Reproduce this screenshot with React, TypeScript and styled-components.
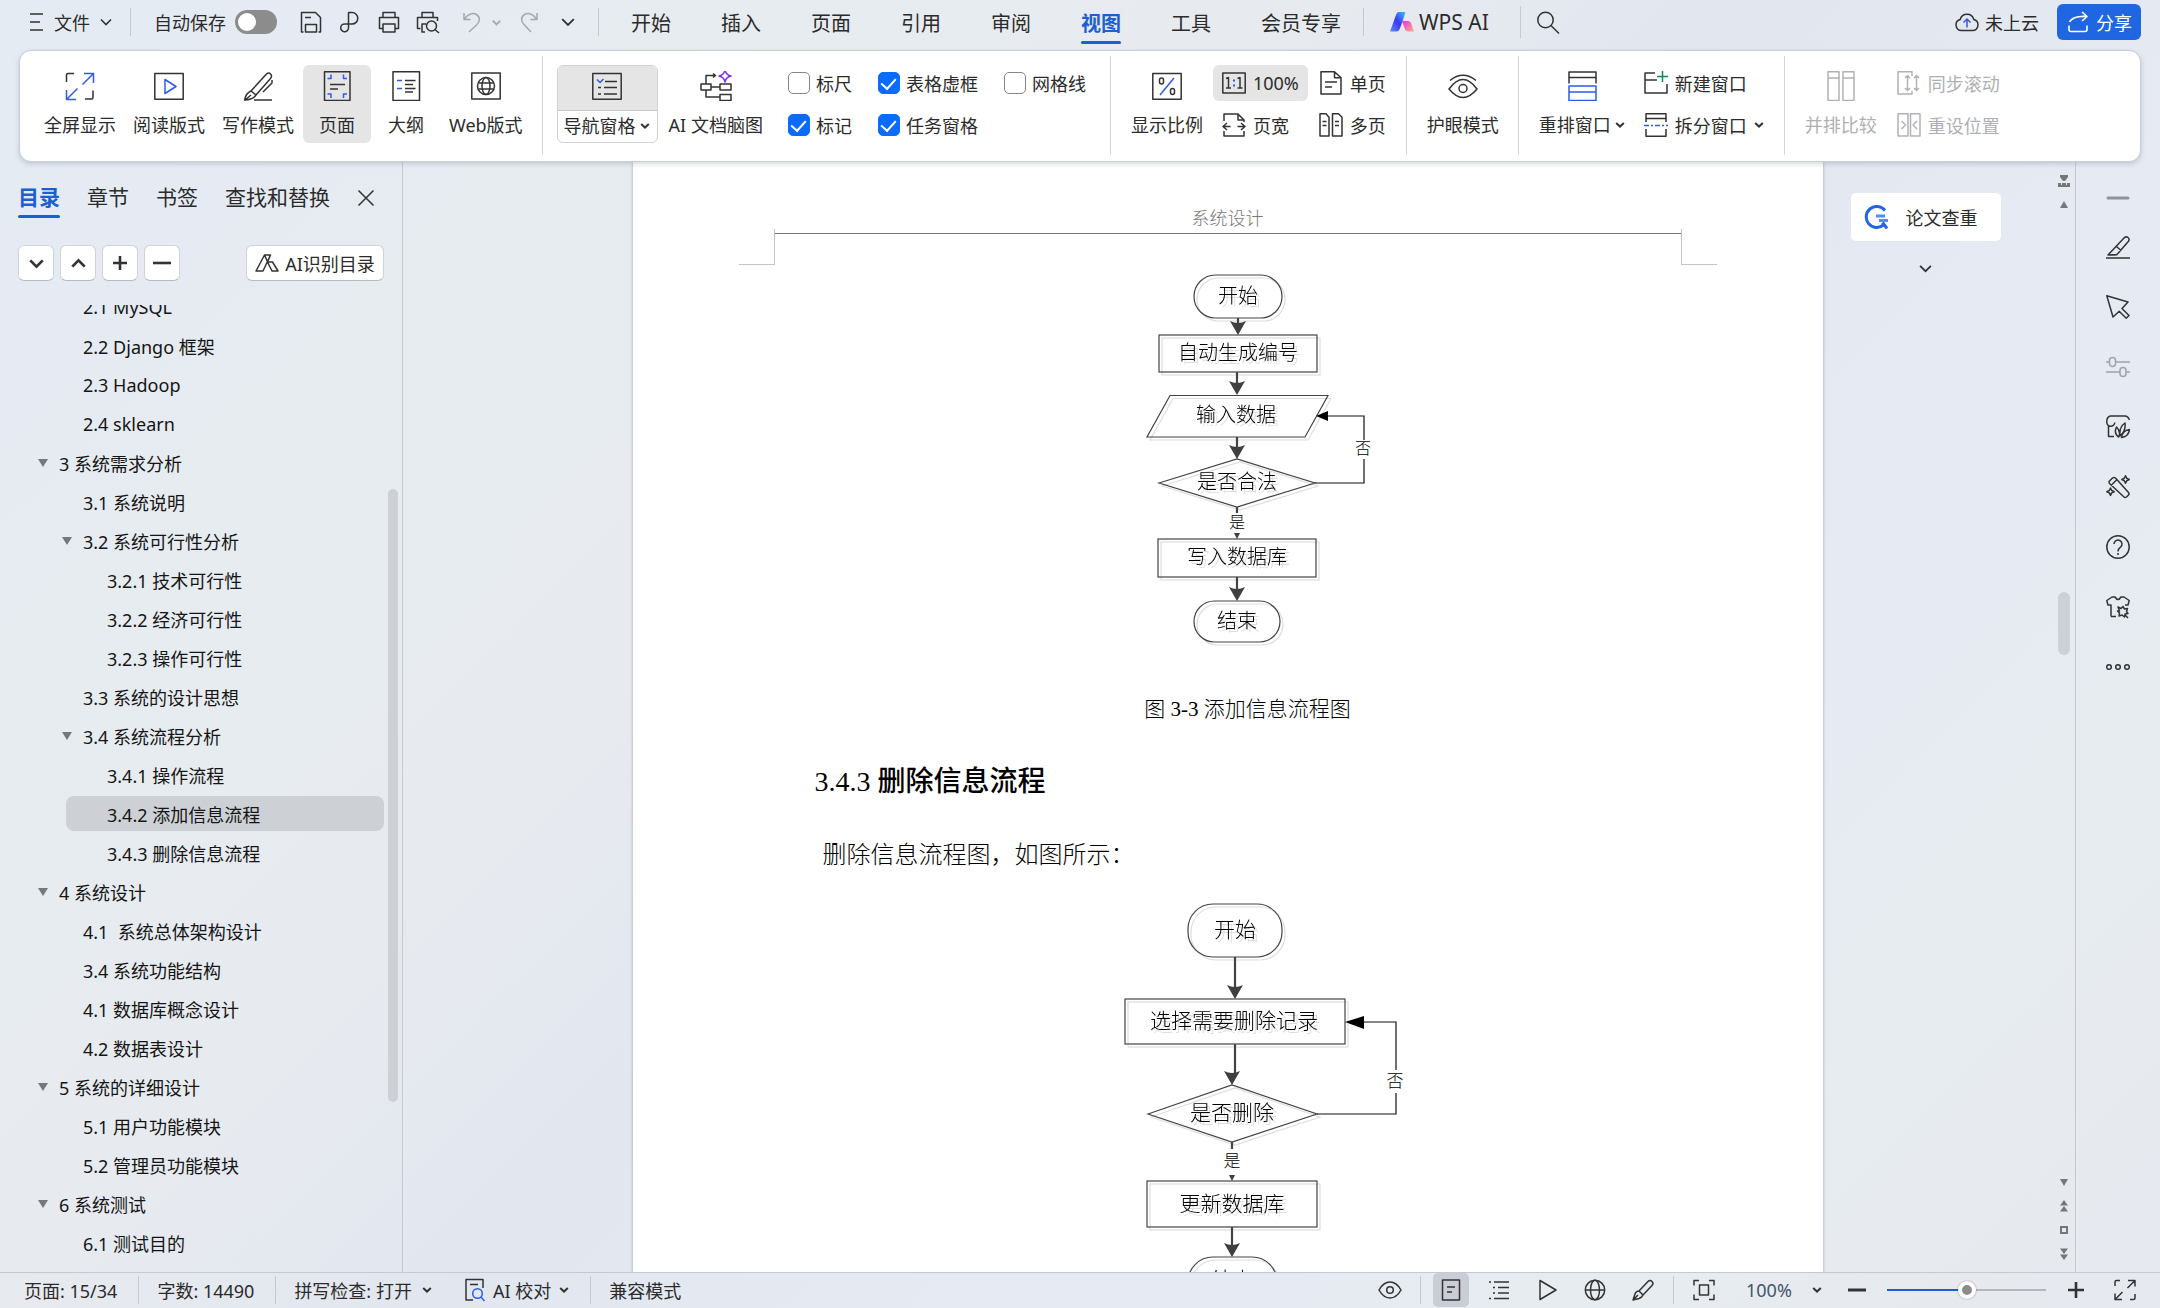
import React from "react";
import styled, { createGlobalStyle, css } from "styled-components";

const INK = "#2b2b2b";
const BLUE = "#1b5fd0";
const ACCENT = "#2f5be8";
const LINE = "#c6cad0";

const GlobalStyle = createGlobalStyle`
  * { box-sizing: border-box; }
  html, body { margin: 0; height: 100%; }
  body {
    font-family: "Noto Sans", "Noto Sans CJK SC", sans-serif;
    font-size: 18px;
    color: ${INK};
  }
  button, input, select { font: inherit; color: inherit; margin: 0; }
  button { background: none; border: 0; padding: 0; cursor: pointer; white-space: nowrap; }
  ul, p, h2, figure { margin: 0; padding: 0; }
  ul { list-style: none; }
`;

const Window = styled.div`
  display: flex;
  flex-direction: column;
  height: 100vh;
  overflow: hidden;
  background: linear-gradient(135deg, #e5ebf3 0%, #e6ebf3 12%, #e7ecf0 22%, #e7ebf0 38%, #e2e6ef 50%, #e5eaf3 66%, #e6ebf3 74%, #e7ecf0 84%, #e6e9ef 100%);
`;

/* ---------- icons ---------- */

type IconProps = { children: React.ReactNode; w?: number; h?: number; sw?: number; color?: string };
const Svg = styled.svg`
  display: block;
  flex: none;
`;
const Icon = ({ children, w = 24, h = 24, sw = 1.5, color = "#333" }: IconProps) => (
  <Svg width={w} height={h} viewBox={`0 0 ${w} ${h}`} fill="none" stroke={color} strokeWidth={sw} strokeLinejoin="round" aria-hidden="true">
    {children}
  </Svg>
);

const Chevron = ({ size = 12, sw = 1.6, up = false, color = "#333" }: { size?: number; sw?: number; up?: boolean; color?: string }) => (
  <Svg width={size} height={size} viewBox="0 0 12 12" fill="none" stroke={color} strokeWidth={sw} aria-hidden="true">
    <path d={up ? "M1 8.5 6 3.5l5 5" : "M1 3.5l5 5 5-5"} />
  </Svg>
);
const Caret = () => (
  <Svg width={10} height={10} viewBox="0 0 10 10" fill="none" stroke="#333" strokeWidth={2} aria-hidden="true">
    <path d="M1.2 3 5 6.6 8.8 3" />
  </Svg>
);

/* ---------- title bar ---------- */

const TitleBar = styled.header`
  display: flex;
  align-items: center;
  flex: none;
  height: 50px;
  padding: 0 19px 6px 28px;
`;
const FileButton = styled.button`
  display: flex;
  align-items: center;
  gap: 10px;
`;
const Rule = styled.i<{ $h?: number; $l?: number; $r?: number }>`
  flex: none;
  width: 1px;
  height: ${(p) => p.$h ?? 28}px;
  margin: 0 ${(p) => p.$r ?? 18}px 0 ${(p) => p.$l ?? 18}px;
  background: ${LINE};
`;
const SwitchLabel = styled.label`
  display: flex;
  align-items: center;
  gap: 9px;
  white-space: nowrap;
`;
const Switch = styled.input`
  appearance: none;
  width: 42px;
  height: 24px;
  border-radius: 12px;
  background: #8c8c8c;
  padding: 3px;
  &::after {
    content: "";
    display: block;
    width: 18px;
    height: 18px;
    border-radius: 50%;
    background: #fff;
  }
`;
const QuickTools = styled.div`
  display: flex;
  gap: 15px;
  margin-left: 22px;
`;
const HistoryTools = styled(QuickTools)`
  align-items: center;
  margin-left: 20px;
`;
const UndoPair = styled.div`
  display: flex;
  align-items: center;
  gap: 6px;
`;
const Center = styled.button`
  display: flex;
  align-items: center;
  justify-content: center;
  min-width: 24px;
  height: 24px;
`;
const SmallCenter = styled(Center)`
  min-width: 12px;
`;
const Tabs = styled.nav`
  display: flex;
  gap: 50px;
  margin-left: 14px;
`;
const underline = css`
  color: ${BLUE};
  font-weight: 700;
  &::after {
    content: "";
    position: absolute;
    left: 0;
    right: 0;
    bottom: 0;
    height: 3px;
    border-radius: 2px;
    background: ${BLUE};
  }
`;
const Tab = styled.button<{ $on?: boolean }>`
  position: relative;
  height: 43px;
  font-size: 20px;
  ${(p) => p.$on && underline}
`;
const AiButton = styled.button`
  display: flex;
  align-items: center;
  gap: 5px;
  font-size: 21px;
`;
const CloudButton = styled.button`
  display: flex;
  align-items: center;
  gap: 6px;
  margin: 0 18px 0 auto;
`;
const ShareButton = styled.button`
  display: flex;
  align-items: center;
  gap: 8px;
  height: 36px;
  padding: 0 9px 0 11px;
  border-radius: 6px;
  background: #1f66e0;
  color: #fff;
`;

const TABS = ["开始", "插入", "页面", "引用", "审阅", "视图", "工具", "会员专享"];

const TopBar = () => (
  <TitleBar>
    <FileButton>
      <Icon w={16} h={20}><path d="M2 2h13M2 10h10M2 18h13" /></Icon>
      文件
      <Chevron />
    </FileButton>
    <Rule $r={23} />
    <SwitchLabel>
      自动保存
      <Switch type="checkbox" role="switch" />
    </SwitchLabel>
    <QuickTools>
      <Center aria-label="保存"><Icon><path d="M4.500 22H2.500V2.500h14l5 5V22h-2M6.500 22v-7.500h11V22zM6 7.500h6" /></Icon></Center>
      <Center aria-label="输出为PDF"><Icon><path d="M10 2.500h4a5.800 5.800 0 0 1 0 11.600H7.800a3.900 3.900 0 1 0 2.700 3.900V2.500" /></Icon></Center>
      <Center aria-label="打印"><Icon><path d="M6 7.500v-5h12v5M6 18.500H2.500v-11h19v11H18M6 14h12v8H6z" /></Icon></Center>
      <Center aria-label="打印预览"><Icon><path d="M6 7.500v-5h11v5M4.500 18.500h-3v-11h20V11M9 22H6v-8h4" /><circle cx="15.500" cy="16" r="5" /><path d="m19 19.500 4 3.500" /></Icon></Center>
    </QuickTools>
    <HistoryTools>
      <UndoPair>
        <Center aria-label="撤销"><Icon color="#a5a8ac"><path d="M4 3v6.500h6.500M4.500 9C8 3.500 13 2.500 16.500 4.500c4 2.600 3.500 7 .5 10L9 22" /></Icon></Center>
        <SmallCenter aria-label="撤销列表"><Chevron size={9} sw={2.400} color="#a5a8ac" /></SmallCenter>
      </UndoPair>
      <Center aria-label="恢复"><Icon color="#a5a8ac"><path d="M20 3v6.500h-6.500M19.500 9C16 3.500 11 2.500 7.500 4.500c-4 2.600-3.500 7-.5 10L14 22" /></Icon></Center>
      <Center aria-label="更多命令"><Chevron size={14} /></Center>
    </HistoryTools>
    <Rule />
    <Tabs>
      {TABS.map((t) => <Tab key={t} $on={t === "视图"}>{t}</Tab>)}
    </Tabs>
    <Rule $l={22} $r={26} />
    <AiButton>
      <Svg width={24} height={20} viewBox="0 0 24 20" aria-hidden="true">
        <defs>
          <linearGradient id="wa" x1="0" y1="1" x2="1" y2="0"><stop offset="0" stopColor="#5b8bff" /><stop offset=".5" stopColor="#4036f2" /><stop offset="1" stopColor="#38c8ff" /></linearGradient>
          <linearGradient id="wb" x1="0" y1="0" x2="1" y2="1"><stop offset="0" stopColor="#e52ef0" /><stop offset="1" stopColor="#ffb27a" /></linearGradient>
        </defs>
        <path d="M8.500 0h7l-3 9.500-3 8q-1 2-3 2H0L6 3Q7 0 8.500 0z" fill="url(#wa)" />
        <path d="M12 9h6q2 0 3 2l3 8.500h-6q-2 0-3-2z" fill="url(#wb)" />
      </Svg>
      WPS AI
    </AiButton>
    <Rule $l={31} $r={15} $h={32} />
    <Center aria-label="搜索"><Icon><circle cx="9.500" cy="10" r="7.700" /><path d="m15 15.500 8 8" /></Icon></Center>
    <CloudButton>
      <Icon><path d="M6.500 20.500a5.600 5.600 0 0 1-1.300-11 7 7 0 0 1 13.600 0 5.600 5.600 0 0 1-1.300 11z" /><path d="M12 17.500v-8M8.500 12.500 12 9l3.500 3.500" stroke={ACCENT} /></Icon>
      未上云
    </CloudButton>
    <ShareButton>
      <Icon w={20} h={24} color="#fff" sw={1.600}><path d="M1 15.500v4q0 2 2 2h14q2 0 2-2v-4M1.500 12C4 7 10 6 19 6.500M14 2l5 4.500-5 4.500" /></Icon>
      分享
    </ShareButton>
  </TitleBar>
);

/* ---------- ribbon ---------- */

const Ribbon = styled.section`
  position: relative;
  z-index: 2;
  flex: none;
  display: flex;
  height: 112px;
  margin: 0 19px;
  padding: 5px 16px;
  border: 1px solid #c9ced4;
  border-radius: 12px;
  background: #fff;
  box-shadow: 0 2px 5px rgba(60, 80, 90, 0.22);
`;
const Group = styled.div<{ $gap?: number }>`
  display: flex;
  align-items: flex-start;
  gap: ${(p) => p.$gap ?? 1}px;
  padding-top: 9px;
`;
const GroupRule = styled.i<{ $r?: number }>`
  flex: none;
  width: 1px;
  height: 99px;
  margin: 0 ${(p) => p.$r ?? 12}px 0 11px;
  background: #d3d5d8;
`;
const BigButton = styled.button<{ $on?: boolean; $off?: boolean }>`
  display: flex;
  flex-direction: column;
  align-items: center;
  gap: 12px;
  min-width: 68px;
  height: 78px;
  padding: 6px 8px;
  border-radius: 6px;
  line-height: 24px;
  background: ${(p) => (p.$on ? "#e5e5e5" : "none")};
  color: ${(p) => (p.$off ? "#aeb0b3" : "inherit")};
`;
const IconLabel = styled.span`
  display: flex;
  align-items: center;
  gap: 4px;
`;
const SplitButton = styled.button`
  display: flex;
  flex-direction: column;
  width: 101px;
  height: 78px;
  border: 1px solid #d2d2d2;
  border-radius: 6px;
  overflow: hidden;
  line-height: 24px;
`;
const SplitTop = styled.span`
  display: flex;
  justify-content: center;
  width: 100%;
  height: 45px;
  padding-top: 5px;
  border-bottom: 1px solid #c8c8c8;
  background: #e5e5e5;
`;
const SplitBottom = styled(IconLabel)`
  height: 30px;
  padding: 0 6px;
`;
const CheckGrid = styled.div`
  display: grid;
  grid-template-columns: repeat(3, auto);
  grid-auto-rows: 36px;
  gap: 6px 26px;
  align-items: center;
  margin: 0 13px 0 14px;
`;
const CheckLabel = styled.label`
  display: flex;
  align-items: center;
  gap: 6px;
  white-space: nowrap;
`;
const CheckBox = styled.input`
  appearance: none;
  display: flex;
  align-items: center;
  justify-content: center;
  width: 22px;
  height: 22px;
  border: 1px solid #858585;
  border-radius: 5px;
  background: #fff;
  &:checked {
    border-color: #0a6cff;
    background: #0a6cff;
  }
  &:checked::after {
    content: "";
    width: 7px;
    height: 12px;
    margin-bottom: 3px;
    border: solid #fff;
    border-width: 0 2px 2px 0;
    transform: rotate(42deg);
  }
`;
const Stack = styled.div`
  display: flex;
  flex-direction: column;
  gap: 6px;
`;
const SmallButton = styled.button<{ $on?: boolean; $off?: boolean }>`
  display: flex;
  align-items: center;
  gap: 7px;
  height: 36px;
  padding: 0 9px;
  border-radius: 6px;
  background: ${(p) => (p.$on ? "#e5e5e5" : "none")};
  color: ${(p) => (p.$off ? "#aeb0b3" : "inherit")};
`;

const Check = ({ label, on }: { label: string; on?: boolean }) => (
  <CheckLabel>
    <CheckBox type="checkbox" defaultChecked={on} />
    {label}
  </CheckLabel>
);

const RibbonBar = () => (
  <Ribbon>
    <Group>
      <BigButton>
        <Icon w={30} h={30}><path d="M1.500 11V4q0-1.500 1.500-1.500h6M20 28h6.500q1.500 0 1.500-1.500v-7" /><path d="M19 2.500h9.500V12M28.500 2.500l-11 11M1.500 19v9.500H11M1.500 28.500l11-11" stroke={ACCENT} /></Icon>
        全屏显示
      </BigButton>
      <BigButton>
        <Icon w={30} h={30}><path d="M.8 2.500h28.400v25.800H.8z" /><path d="m11 8.500 11 7-11 7z" stroke={ACCENT} /></Icon>
        阅读版式
      </BigButton>
      <BigButton>
        <Icon w={30} h={30}><path d="M8 20 23.500 3q2-2 4 0t0 4.500L13 24M8 20q-5 2-6.500 9Q10 29 13 24zM2 29l6-5M11 29h18M29 9v3l-9 9" /></Icon>
        写作模式
      </BigButton>
      <BigButton $on>
        <Icon w={30} h={30}><path d="M2.500.8h25.500v28.600H2.500zM8 13.500h15M8 18h8" /><path d="M9 3.500v4H5.500M21.500 3.500v4H25M9 27v-4H5.500M21.500 27v-4H25" stroke={ACCENT} /></Icon>
        页面
      </BigButton>
      <BigButton>
        <Icon w={30} h={30}><path d="M2 .8h26.500v28.600H2zM14 9.500h10.500M14 13.500h8M14 17.500h10.500M14 21h8" /><path d="M6 9.500h5M6 17.500h5" stroke={ACCENT} /></Icon>
        大纲
      </BigButton>
      <BigButton>
        <Icon w={30} h={30}><path d="M.8 2h28.400v26H.8z" /><circle cx="15" cy="15" r="8.500" /><ellipse cx="15" cy="15" rx="4" ry="8.500" /><path d="M7.500 12h15M7.500 18h15" /></Icon>
        Web版式
      </BigButton>
    </Group>
    <GroupRule $r={14} />
    <Group $gap={3}>
      <SplitButton>
        <SplitTop><Icon w={30} h={30}><path d="M.8 2.500h28.400v25.800H.8zM13 10.500h12M6 16.500h3M12 16.500h13M6 23h3M12 23h13" /><path d="m5 8.500 3 3 3.500-3.500" stroke={ACCENT} /></Icon></SplitTop>
        <SplitBottom>导航窗格<Caret /></SplitBottom>
      </SplitButton>
      <BigButton>
        <Icon w={32} h={30}><path d="M1 13h10v6H1zM20 13h11v6H20zM20 23.500h11v6H20zM11 16h9M6 13V4.500h9M6 19v7h14M13 2.500l2.500 2-2.500 2" /><path d="M25-1q1 5 6 6-5 1-6 6-1-5-6-6 5-1 6-6z" stroke="#7a35e8" fill="#fff" /></Icon>
        AI 文档脑图
      </BigButton>
      <CheckGrid>
        <Check label="标尺" />
        <Check label="表格虚框" on />
        <Check label="网格线" />
        <Check label="标记" on />
        <Check label="任务窗格" on />
      </CheckGrid>
    </Group>
    <GroupRule />
    <Group $gap={2}>
      <BigButton>
        <Icon w={30} h={30}><path d="M.8 2.500h28.400v25.800H.8z" /><rect x="7.500" y="7" width="4" height="6" rx="2" /><rect x="18.500" y="17.500" width="4" height="6" rx="2" /><path d="M22 7 8 24" stroke={ACCENT} /></Icon>
        显示比例
      </BigButton>
      <Stack>
        <SmallButton $on><Icon><path d="M.8 2h22.400v20H.8zM4 7.500l2.500-1V17M4 17h5M15.500 7.500l2.500-1V17M15.500 17h5" /><path d="M11 9.500h2M11 14.500h2" stroke={ACCENT} strokeWidth="2" /></Icon>100%</SmallButton>
        <SmallButton><Icon><path d="M2 8V1h14l6 6v2M16 1v6h6M2 18v5h20v-5M1 13.500h7.500M5 10l-4 3.500L5 17M23 13.500h-7.500M19 10l4 3.500-4 3.500" /></Icon>页宽</SmallButton>
      </Stack>
      <Stack>
        <SmallButton><Icon><path d="M2 .8h13.500l6.500 6V23H2zM15.500.8v6H22M6 11h12M6 16h7" /></Icon>单页</SmallButton>
        <SmallButton><Icon><path d="M1 .8h6l3 3.500V23H1zM13.500 23V.8h6l3.500 3.500V23zM3.500 8.500h4M3.500 12.500h4M16 8.500h4M16 12.500h4" /></Icon>多页</SmallButton>
      </Stack>
    </Group>
    <GroupRule />
    <Group>
      <BigButton>
        <Icon w={30} h={30}><path d="M2 9.500Q15-1 28 9.500M1 18Q8 8.500 15 8.500T29 18q-7 8.500-14 8.500T1 18z" /><circle cx="15" cy="17.500" r="4" /></Icon>
        护眼模式
      </BigButton>
    </Group>
    <GroupRule />
    <Group $gap={2}>
      <BigButton>
        <Icon w={30} h={30}><path d="M2 12.500V1h27v11.500M2 6.500h27" /><path d="M2 15h27v14.500H2zM2 21h27" stroke={ACCENT} /></Icon>
        <IconLabel>重排窗口<Caret /></IconLabel>
      </BigButton>
      <Stack>
        <SmallButton><Icon><path d="M11 2H1v20h22v-9M1 9h12" /><path d="M18.500 0v11M13 5.500h11" stroke="#0c8a55" /></Icon>新建窗口</SmallButton>
        <SmallButton><Icon><path d="M2 9V.8h20V9M2 5.500h20M2 16v7.200h20V16" /><path d="M0 12.500h24" stroke={ACCENT} strokeDasharray="5 2 2 2" /></Icon>拆分窗口<Caret /></SmallButton>
      </Stack>
    </Group>
    <GroupRule />
    <Group $gap={3}>
      <BigButton $off>
        <Icon w={30} h={30} color="#b0b2b5"><path d="M2 .8h11v28.600H2zM2 7h11M17 .8h11v28.600H17zM17 7h11" /></Icon>
        并排比较
      </BigButton>
      <Stack>
        <SmallButton $off><Icon color="#b0b2b5"><path d="M15 5V.8H1V23h14v-3M10.500 4.500v15M8 7l2.500-2.500L13 7M8 17l2.500 2.500L13 17M19.500 4.500v15M17 7l2.500-2.500L22 7M17 17l2.500 2.500L22 17" /></Icon>同步滚动</SmallButton>
        <SmallButton $off><Icon color="#b0b2b5"><path d="M1 .8h10V23H1zM13.500.8H23V23h-9.500zM4.500 8l4 4-4 4M20 8l-4 4 4 4" /></Icon>重设位置</SmallButton>
      </Stack>
    </Group>
  </Ribbon>
);

/* ---------- navigation pane ---------- */

const Main = styled.main`
  display: flex;
  flex: 1;
  min-height: 0;
`;
const NavPane = styled.aside`
  display: flex;
  flex-direction: column;
  flex: none;
  width: 403px;
  border-right: 1px solid ${LINE};
`;
const PaneTabs = styled.div`
  display: flex;
  align-items: center;
  gap: 27px;
  padding: 16px 18px 0;
`;
const PaneTab = styled.button<{ $on?: boolean }>`
  position: relative;
  height: 40px;
  padding-bottom: 4px;
  font-size: 21px;
  ${(p) => p.$on && underline}
`;
const PaneTools = styled.div`
  display: flex;
  gap: 6px;
  padding: 27px 18px 24px;
`;
const SquareButton = styled.button`
  display: flex;
  align-items: center;
  justify-content: center;
  width: 36px;
  height: 36px;
  border: 1px solid #cfd3d8;
  border-bottom-color: #b7babf;
  border-radius: 6px;
  background: #fff;
`;
const AiTocButton = styled(SquareButton)`
  gap: 6px;
  width: 138px;
  margin-left: auto;
`;
const TreeArea = styled.div`
  display: flex;
  flex: 1;
  min-height: 0;
  overflow: hidden;
`;
const Tree = styled.ul`
  display: flex;
  flex-direction: column;
  flex: 1;
  gap: 4px;
  margin-top: -16px;
`;
const TreeRow = styled.li<{ $level: number; $on?: boolean }>`
  display: flex;
  align-items: center;
  flex: none;
  height: 35px;
  margin-left: ${(p) => p.$level * 24 - 6}px;
  border-radius: 8px;
  background: ${(p) => (p.$on ? "#cdd1d5" : "none")};
  color: #151515;
`;
const Twisty = styled.button`
  display: flex;
  justify-content: center;
  width: 41px;
  padding-left: 9px;
`;
const Gap = styled.span`
  width: 41px;
`;
const Bar = styled.div`
  width: 10px;
  height: 613px;
  margin: 184px 4px 0;
  border-radius: 5px;
  background: #cdd0d4;
`;

type Entry = [level: number, text: string, open?: boolean];
const ENTRIES: Entry[] = [
  [2, "2.1 MySQL"], [2, "2.2 Django 框架"], [2, "2.3 Hadoop"], [2, "2.4 sklearn"],
  [1, "3 系统需求分析", true], [2, "3.1 系统说明"], [2, "3.2 系统可行性分析", true],
  [3, "3.2.1 技术可行性"], [3, "3.2.2 经济可行性"], [3, "3.2.3 操作可行性"],
  [2, "3.3 系统的设计思想"], [2, "3.4 系统流程分析", true],
  [3, "3.4.1 操作流程"], [3, "3.4.2 添加信息流程"], [3, "3.4.3 删除信息流程"],
  [1, "4 系统设计", true], [2, "4.1  系统总体架构设计"], [2, "3.4 系统功能结构"],
  [2, "4.1 数据库概念设计"], [2, "4.2 数据表设计"],
  [1, "5 系统的详细设计", true], [2, "5.1 用户功能模块"], [2, "5.2 管理员功能模块"],
  [1, "6 系统测试", true], [2, "6.1 测试目的"],
];
const RowText = styled.span`
  white-space: pre;
`;

const Navigation = () => (
  <NavPane>
    <PaneTabs>
      <PaneTab $on>目录</PaneTab>
      <PaneTab>章节</PaneTab>
      <PaneTab>书签</PaneTab>
      <PaneTab>查找和替换</PaneTab>
      <SmallCenter aria-label="关闭"><Icon w={18} h={18}><path d="m1.500 1.500 15 15M16.500 1.500l-15 15" /></Icon></SmallCenter>
    </PaneTabs>
    <PaneTools>
      <SquareButton aria-label="展开"><Chevron size={15} sw={2.200} /></SquareButton>
      <SquareButton aria-label="收起"><Chevron size={15} sw={2.200} up /></SquareButton>
      <SquareButton aria-label="增加级别"><Icon w={18} h={18} sw={2.600}><path d="M9 2v14M2 9h14" /></Icon></SquareButton>
      <SquareButton aria-label="减少级别"><Icon w={18} h={18} sw={2.600}><path d="M0 9h18" /></Icon></SquareButton>
      <AiTocButton>
        <Icon w={24} h={20}><path d="M9.500 2h6L8 18H1zM9.500 2l4 9M15.500 2l-3 7h5l5.500 9h-6l-4.500-9" /></Icon>
        AI识别目录
      </AiTocButton>
    </PaneTools>
    <TreeArea>
      <Tree>
        {ENTRIES.map(([level, text, open]) => (
          <TreeRow key={text} $level={level} $on={text.startsWith("3.4.2")}>
            {open ? (
              <Twisty aria-label="折叠">
                <Svg width={10} height={10} viewBox="0 0 10 10" fill="#777" aria-hidden="true"><path d="M0 1h10L5 9z" /></Svg>
              </Twisty>
            ) : <Gap />}
            <RowText>{text}</RowText>
          </TreeRow>
        ))}
      </Tree>
      <Bar />
    </TreeArea>
  </NavPane>
);

/* ---------- document ---------- */

const Stage = styled.div`
  display: grid;
  grid-template-columns: 1fr minmax(0, 1190px) 1fr;
  flex: 1;
  min-width: 0;
  overflow: hidden;
`;
const Paper = styled.article`
  grid-column: 2;
  height: 1684px;
  background: #fff;
  box-shadow: 0 0 3px rgba(90, 100, 120, 0.5);
  color: #000;
  font-family: "Liberation Serif", "Noto Sans CJK SC", serif;
  font-weight: 300;
`;
const PaperHead = styled.div`
  display: grid;
  grid-template-columns: 142px 1fr 142px;
  height: 103px;
`;
const RunningHead = styled.p`
  height: 72px;
  padding-top: 43px;
  border-bottom: 1px solid #777;
  text-align: center;
  line-height: 28px;
  color: #777;
`;
const Corner = styled.i<{ $left?: boolean }>`
  justify-self: ${(p) => (p.$left ? "end" : "start")};
  width: 36px;
  height: 36px;
  margin-top: 67px;
  border: solid #c4c4c4;
  border-width: ${(p) => (p.$left ? "0 1px 1px 0" : "0 0 1px 1px")};
`;
const PaperBody = styled.div`
  padding: 0 142px 0 182px;
`;
const Figure = styled.figure`
  display: flex;
  flex-direction: column;
  align-items: center;
`;
const Caption = styled.figcaption`
  margin-top: 39px;
  font-size: 21px;
  line-height: 30px;
`;
const Heading = styled.h2`
  margin-top: 38px;
  font-size: 28px;
  font-weight: 500;
  line-height: 40px;
`;
const Paragraph = styled.p`
  margin: 35px 0 17px;
  padding-left: 8px;
  font-size: 24px;
  line-height: 36px;
`;
const Chart = styled.svg`
  display: block;
  overflow: visible;
  fill: none;
  stroke: #444;
  stroke-width: 1.2;
  text {
    fill: #000;
    stroke: none;
    text-anchor: middle;
    dominant-baseline: central;
  }
  .shaded { filter: drop-shadow(3px 3px 0 #dedede); }
  .head { fill: #3f3f3f; stroke: none; }
  .loop { fill: #000; stroke: none; }
`;

const Arrow = ({ x, from, to, tip = x }: { x: number; from: number; to: number; tip?: number }) => (
  <>
    <path d={`M${x} ${from}V${to - 10}`} strokeWidth={2.200} />
    <path className="head" d={`M${tip} ${to}l-8-14q8 4 16 0z`} />
  </>
);

const AddFlow = () => (
  <Chart width={260} height={390} viewBox="1118 265 260 390" fontSize={20}>
    <g className="shaded">
      <rect x="1194" y="275" width="88" height="43" rx="21.500" />
      <text x="1238" y="296">开始</text>
      <rect x="1159" y="335" width="158" height="37" />
      <text x="1238" y="353">自动生成编号</text>
      <path d="M1170 395.500h158l-23 41.500h-158z" />
      <text x="1236" y="415">输入数据</text>
      <path d="m1159 483 78-24 78 24-78 24z" />
      <text x="1237" y="482">是否合法</text>
      <rect x="1158" y="539" width="158" height="38" />
      <text x="1237" y="557">写入数据库</text>
      <rect x="1194" y="601" width="86" height="41" rx="20.500" />
      <text x="1237" y="621">结束</text>
    </g>
    <Arrow x={1238} from={318} to={335} />
    <Arrow x={1237} from={372} to={395} />
    <Arrow x={1237} from={437} to={459} />
    <Arrow x={1237} from={577} to={601} />
    <path d="M1237 507v6" strokeWidth="2.200" />
    <path className="head" d="m1237 539-3-6h6z" />
    <path d="M1315 483h49v-24M1364 440v-24h-40" stroke="#111" />
    <path className="loop" d="m1316 416 12-5v10z" />
    <text x="1237" y="522" fontSize={16}>是</text>
    <text x="1363" y="448" fontSize={16}>否</text>
  </Chart>
);

const DeleteFlow = () => (
  <Chart width={320} height={440} viewBox="1088 890 320 440" fontSize={21}>
    <g className="shaded">
      <rect x="1188" y="904" width="94" height="53" rx="25" />
      <text x="1235" y="930">开始</text>
      <rect x="1125" y="999" width="220" height="45" />
      <text x="1234" y="1021">选择需要删除记录</text>
      <path d="m1148 1114 84-29 85 29-85 28z" />
      <text x="1232" y="1113">是否删除</text>
      <rect x="1147" y="1181" width="170" height="46" />
      <text x="1232" y="1204">更新数据库</text>
      <rect x="1188" y="1257" width="89" height="52" rx="25" />
      <text x="1232" y="1280">结束</text>
    </g>
    <Arrow x={1235} from={957} to={999} />
    <Arrow x={1235} from={1044} to={1085} tip={1232} />
    <Arrow x={1232} from={1227} to={1257} />
    <path d="M1232 1142v7" strokeWidth="2.200" />
    <path className="head" d="m1232 1181-3-6h6z" />
    <path d="M1317 1114h79v-21M1396 1070v-48h-36" stroke="#111" />
    <path className="loop" d="m1345 1022 19-6v13z" />
    <text x="1232" y="1161" fontSize={17}>是</text>
    <text x="1395" y="1081" fontSize={17}>否</text>
  </Chart>
);

const SideTools = styled.div`
  display: flex;
  flex-direction: column;
  align-items: center;
  gap: 15px;
  width: 150px;
  margin: 31px 0 0 28px;
`;
const CheckCard = styled.button`
  display: flex;
  align-items: center;
  gap: 18px;
  width: 150px;
  height: 48px;
  padding: 0 13px;
  border-radius: 5px;
  background: #fff;
`;
const ScrollColumn = styled.div`
  display: flex;
  flex-direction: column;
  align-items: center;
  gap: 10px;
  flex: none;
  width: 23px;
  padding: 12px 0 11px;
`;
const Step = styled.button`
  height: 14px;
`;
const Track = styled.div`
  flex: 1;
`;
const Thumb = styled.div`
  width: 12px;
  height: 63px;
  margin-top: 370px;
  border-radius: 6px;
  background: #cdd0d4;
`;
const StepIcon = ({ d }: { d: string }) => (
  <Svg width={12} height={14} viewBox="0 0 12 14" fill="#777" fillRule="evenodd" aria-hidden="true"><path d={d} /></Svg>
);

const Rail = styled.aside`
  display: flex;
  flex-direction: column;
  align-items: center;
  gap: 36px;
  flex: none;
  width: 85px;
  padding-top: 24px;
  border-left: 1px solid ${LINE};
`;
const CollapseButton = styled(Center)`
  margin-bottom: -11px;
`;

const Document = () => (
  <>
    <Stage>
      <Paper>
        <PaperHead>
          <Corner $left />
          <RunningHead>系统设计</RunningHead>
          <Corner />
        </PaperHead>
        <PaperBody>
          <Figure>
            <AddFlow />
            <Caption>图 3-3 添加信息流程图</Caption>
          </Figure>
          <Heading>3.4.3 删除信息流程</Heading>
          <Paragraph>删除信息流程图，如图所示：</Paragraph>
          <Figure><DeleteFlow /></Figure>
        </PaperBody>
      </Paper>
      <SideTools>
        <CheckCard>
          <Svg width={24} height={24} viewBox="0 0 24 24" fill="none" strokeWidth={3} aria-hidden="true">
            <path d="M21 5.500A10.500 10.500 0 1 0 19.500 20M18.500 17.500l4.500 6" stroke="#1f66e0" />
            <path d="M12 11h9M15 15.500h9" stroke="#4a8dff" />
          </Svg>
          论文查重
        </CheckCard>
        <Center aria-label="展开"><Chevron size={13} /></Center>
      </SideTools>
    </Stage>
    <ScrollColumn>
      <Step aria-label="标尺"><StepIcon d="M2 1h8v2L7 7H5L2 3zM0 9h12v4H0zM3 9v2h1V9zM8 9v2h1V9z" /></Step>
      <Step aria-label="上移"><StepIcon d="M6 3l4 7H2z" /></Step>
      <Track><Thumb /></Track>
      <Step aria-label="下移"><StepIcon d="M6 11 2 4h8z" /></Step>
      <Step aria-label="上一页"><StepIcon d="M6 1l4 5.500H2zM6 7l4 5.500H2z" /></Step>
      <Step aria-label="选择浏览对象"><StepIcon d="M2 3h8v8H2zM4 5v4h4V5z" /></Step>
      <Step aria-label="下一页"><StepIcon d="M6 7 2 1.500h8zM6 13 2 7.500h8z" /></Step>
    </ScrollColumn>
    <Rail>
      <CollapseButton aria-label="收起窗格"><Icon sw={3} color="#909398"><path d="M2 12h20" strokeLinecap="round" /></Icon></CollapseButton>
      <Center aria-label="样式"><Icon><path d="M0 23h24M2 20 18 3q2-2 4-.500t.3 4L11 19.500zM2 20h9M10.500 11.500l4.500 4" /></Icon></Center>
      <Center aria-label="选择"><Icon><path d="M.8.8 22 7l-6 6.500 7 7-2.800 2.800-7-7L7 22z" /></Icon></Center>
      <Center aria-label="属性"><Icon color="#a0a4a9"><rect x="3.500" y="2.500" width="6" height="9" rx="3" /><rect x="14" y="12.500" width="6" height="9" rx="3" /><path d="M0 7h3.500M9.500 7H24M0 17h14M20 17h4" /></Icon></Center>
      <Center aria-label="素材"><Icon><path d="M4 1h15q3 0 4.500 4M4 1Q.5 2.500.8 7a4 4 0 0 0 8 .5M2.500 11v10.500H8" /><path d="M12.500 22q-5-4-2-10 5 5 2 10zM14 21q-1-9 5-13 1 8-5 13zM15.500 22.500q1-7 8-8-1 7-8 8z" /></Icon></Center>
      <Center aria-label="智能工具"><Icon><path d="m3.500 6 3-3q1.500-1 3 0l13 14.500q1 1.500 0 2.500l-2 2q-1.500 1-2.500 0L3.500 8.500q-1-1.500 0-2.500zM10.500 5l-5.500 5.500" /><path d="m19.500.8 1.200 2.500 2.500 1.200-2.500 1.200-1.200 2.500-1.200-2.500-2.500-1.200 2.500-1.200zM4.500 13l1.200 2.500 2.500 1.200-2.500 1.200-1.200 2.500-1.200-2.500-2.500-1.200 2.500-1.200z" /></Icon></Center>
      <Center aria-label="帮助"><Icon><circle cx="12" cy="12" r="11.200" /><path d="M8 9a4 4 0 1 1 6.500 3.200Q12 14 12 16.500M12 18v2" /></Icon></Center>
      <Center aria-label="皮肤"><Icon><path d="M5 21.500V10H2L.8 5.500 6 2h3q3 5 6 0h3l5.200 3.500L22 10h-3M5 21.500h5" /><path d="m12 12 3 1.500 2-2 1.500 2.500 3-.500-1 3 1.500 2-3 .5-.500 3-2.500-2-3 1 .5-3-2-2h2zM19 20l3 3" /></Icon></Center>
      <Center aria-label="更多"><Icon><circle cx="3" cy="12" r="2.300" /><circle cx="12" cy="12" r="2.300" /><circle cx="21" cy="12" r="2.300" /></Icon></Center>
    </Rail>
  </>
);

/* ---------- status bar ---------- */

const StatusBar = styled.footer`
  display: flex;
  align-items: center;
  flex: none;
  height: 36px;
  padding: 0 23px 1px 24px;
  border-top: 1px solid ${LINE};
  white-space: nowrap;
`;
const StatusButton = styled.button<{ $gap?: number }>`
  display: flex;
  align-items: center;
  gap: ${(p) => p.$gap ?? 10}px;
`;
const ProofButton = styled(StatusButton)`
  margin-left: 33px;
`;
const StatusRight = styled.div`
  display: flex;
  align-items: center;
  margin-left: auto;
`;
const Views = styled.div`
  display: flex;
  gap: 12px;
`;
const ViewButton = styled.button<{ $on?: boolean }>`
  display: flex;
  align-items: center;
  justify-content: center;
  width: 36px;
  height: 34px;
  border-radius: 5px;
  background: ${(p) => (p.$on ? "#cacdd5" : "none")};
`;
const ZoomBox = styled.label`
  display: grid;
  align-items: center;
  width: 76px;
  margin: 0 23px 0 24px;
  & > * { grid-area: 1 / 1; }
  & > svg { justify-self: end; pointer-events: none; }
`;
const ZoomSelect = styled.select`
  appearance: none;
  width: 100%;
  padding: 0;
  border: 0;
  background: none;
  color: #44546e;
`;
const Slider = styled.input`
  appearance: none;
  width: 159px;
  height: 20px;
  margin: 0 18px;
  background: linear-gradient(to right, #1b5fd0 50%, #b4b8be 50%) center / 100% 2px no-repeat;
  &::-webkit-slider-thumb {
    appearance: none;
    width: 18px;
    height: 18px;
    border: 4px solid #fff;
    border-radius: 50%;
    background: #8c8c8c;
    box-shadow: 0 0 2px rgba(0, 0, 0, 0.4);
  }
`;
const PlusButton = styled(Center)`
  margin-right: 25px;
`;

const Status = () => (
  <StatusBar>
    <StatusButton>页面: 15/34</StatusButton>
    <Rule $l={21} />
    <StatusButton>字数: 14490</StatusButton>
    <Rule $l={21} />
    <StatusButton>拼写检查: 打开<Caret /></StatusButton>
    <ProofButton $gap={8}>
      <Icon w={20} h={24}><path d="M18 10V1.500H1V22h7M5 6.500h8" /><circle cx="12.500" cy="15.500" r="4.800" stroke={ACCENT} /><path d="m16 19 3.500 4" stroke={ACCENT} /></Icon>
      AI 校对
      <Caret />
    </ProofButton>
    <Rule $l={21} />
    <StatusButton>兼容模式</StatusButton>
    <StatusRight>
      <Center aria-label="护眼"><Icon><path d="M1 12Q5.500 4 12 4t11 8q-4.500 8-11 8T1 12z" /><circle cx="12" cy="12" r="3.300" /></Icon></Center>
      <Rule $r={12} />
      <Views>
        <ViewButton $on aria-label="页面视图"><Icon><path d="M3.500 2h17v20h-17zM8 9h8M8 14h5" /></Icon></ViewButton>
        <ViewButton aria-label="大纲视图"><Icon><path d="M2 4h2M7 4h15M6 9.500h2M11 9.500h11M6 15h2M11 15h11M2 20.500h2M7 20.500h15" /></Icon></ViewButton>
        <ViewButton aria-label="阅读视图"><Icon><path d="m5 2.500 16 9.500-16 9.500z" /></Icon></ViewButton>
        <ViewButton aria-label="Web视图"><Icon><circle cx="12" cy="12" r="9.700" /><ellipse cx="12" cy="12" rx="4.500" ry="9.700" /><path d="M2.500 12h19" /></Icon></ViewButton>
        <ViewButton aria-label="写作视图"><Icon><path d="M8 13 17 3.500q2-2 4 0t0 4L12 17M8 13q-3 0-4 3l-2 6 6-1.500q3-1 4-3.500zM2 22l5-5" /></Icon></ViewButton>
      </Views>
      <Rule $l={12} $r={12} />
      <ViewButton aria-label="适应页面"><Icon><path d="M2 7.500V2.500h5M17 2.500h5v5M22 16.500v5h-5M7 21.500H2v-5M7.500 7h9v10h-9z" /></Icon></ViewButton>
      <ZoomBox>
        <ZoomSelect aria-label="缩放比例" defaultValue="100%">
          <option>100%</option>
        </ZoomSelect>
        <Caret />
      </ZoomBox>
      <Center aria-label="缩小"><Icon sw={3}><path d="M3 12h18" /></Icon></Center>
      <Slider type="range" aria-label="缩放" min={0} max={100} defaultValue={50} />
      <PlusButton aria-label="放大"><Icon sw={2.600}><path d="M4 12h16M12 4v16" /></Icon></PlusButton>
      <Center aria-label="全屏"><Icon><path d="M2 8V4q0-1.500 1.500-1.500H7M22 16v4q0 1.500-1.500 1.500H17M15 2.500h7v6M22 2.500 14.500 10M2 15.500v6h7M2 21.500 9.500 14" /></Icon></Center>
    </StatusRight>
  </StatusBar>
);

export default function App() {
  return (
    <Window>
      <GlobalStyle />
      <TopBar />
      <RibbonBar />
      <Main>
        <Navigation />
        <Document />
      </Main>
      <Status />
    </Window>
  );
}
